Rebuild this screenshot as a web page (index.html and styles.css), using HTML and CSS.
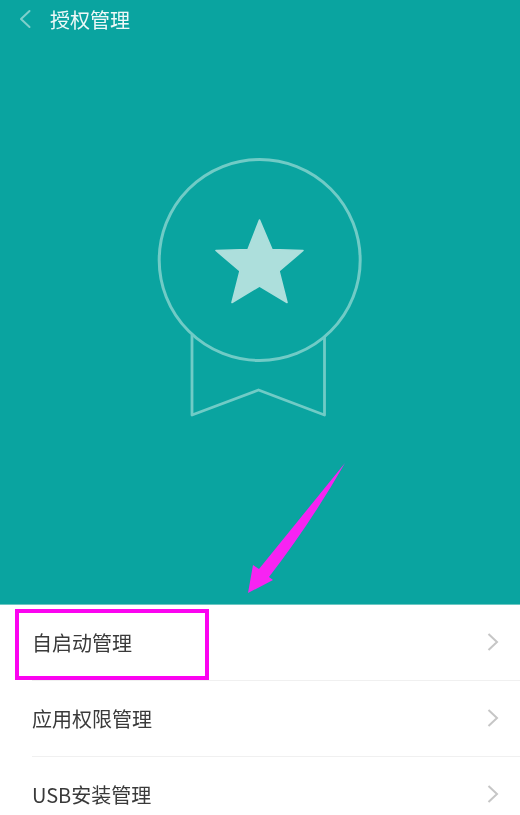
FILE: index.html
```html
<!DOCTYPE html>
<html lang="zh-CN">
<head>
<meta charset="utf-8">
<title>授权管理</title>
<link rel="stylesheet" href="styles.css">
</head>
<body>
<main class="page">
  <section class="hero">
    <header class="topbar">
      <svg class="back" viewBox="0 0 14 20" width="14" height="20"><path d="M11.5 2 L3 10 L11.5 18" fill="none" stroke="#7fcfcb" stroke-width="2" stroke-linecap="round" stroke-linejoin="round"/></svg>
      <h1 class="title">授权管理</h1>
    </header>
    <svg class="medal" viewBox="156 156 208 262" width="208" height="262">
      <circle cx="259.7" cy="260" r="100.5" fill="none" stroke="#70cbc6" stroke-width="3"/>
      <path d="M192 335 V415 L258.5 390 L324.5 415 V337" fill="none" stroke="#70cbc6" stroke-width="2.8" stroke-linejoin="round"/>
      <path d="M259.5 220 L272 249.5 L303 250.5 L279 271 L287 302.5 L259.5 286 L232 302.5 L240 271 L216 250.5 L248 249.5 Z" fill="#addfdc" stroke="#addfdc" stroke-width="1.6" stroke-linejoin="round"/>
    </svg>
  </section>
  <ul class="list">
    <li class="row"><span class="label">自启动管理</span><svg class="chev" viewBox="0 0 12 20" width="12" height="20"><path d="M1.5 2 L10 10 L1.5 18" fill="none" stroke="#c6c6c6" stroke-width="2"/></svg></li>
    <li class="row"><span class="label">应用权限管理</span><svg class="chev" viewBox="0 0 12 20" width="12" height="20"><path d="M1.5 2 L10 10 L1.5 18" fill="none" stroke="#c6c6c6" stroke-width="2"/></svg></li>
    <li class="row"><span class="label">USB安装管理</span><svg class="chev" viewBox="0 0 12 20" width="12" height="20"><path d="M1.5 2 L10 10 L1.5 18" fill="none" stroke="#c6c6c6" stroke-width="2"/></svg></li>
  </ul>
  <svg class="arrow" viewBox="0 0 520 815" width="520" height="815"><path d="M345 463 Q310 524 269 577 L273 580 L248 593 L253 565 L259 569 L345 463 Z" fill="#f723f2"/></svg>
  <div class="highlight"></div>
</main>
</body>
</html>
```
FILE: styles.css
```css
* { box-sizing: border-box; }
html, body { margin: 0; padding: 0; height: 100%; overflow: hidden; background: #fff; }
body { font-family: "Noto Sans CJK SC", "Liberation Sans", sans-serif; }
.page { position: relative; width: 520px; height: 815px; overflow: hidden; }
.hero {
  height: 605px;
  background: #0aa4a0;
  display: flex;
  flex-direction: column;
  align-items: center;
  border-bottom: 1px solid #6cc8c3;
  filter: blur(0.4px);
}
.topbar {
  align-self: stretch;
  height: 40px;
  display: flex;
  align-items: center;
  gap: 18px;
  padding-left: 18px;
}
.back { flex: none; margin-top: -2px; }
.title { margin: 0; font-size: 20px; font-weight: 400; line-height: 1; color: #eef9f8; }
.medal { display: block; margin-top: 116px; }
.list { list-style: none; margin: 0; padding: 0; filter: blur(0.4px); }
.row {
  height: 76px;
  margin-left: 32px;
  padding-right: 21px;
  display: flex;
  align-items: center;
  justify-content: space-between;
  border-bottom: 1px solid #f0f0f0;
}
.chev { margin-top: -2px; }
.label { font-size: 20px; line-height: 1; color: #3a3a3a; }
.arrow { position: absolute; left: 0; top: 0; }
.highlight {
  position: absolute;
  left: 15px;
  top: 609px;
  width: 194px;
  height: 71px;
  border: 4px solid #fb03f0;
}
```
